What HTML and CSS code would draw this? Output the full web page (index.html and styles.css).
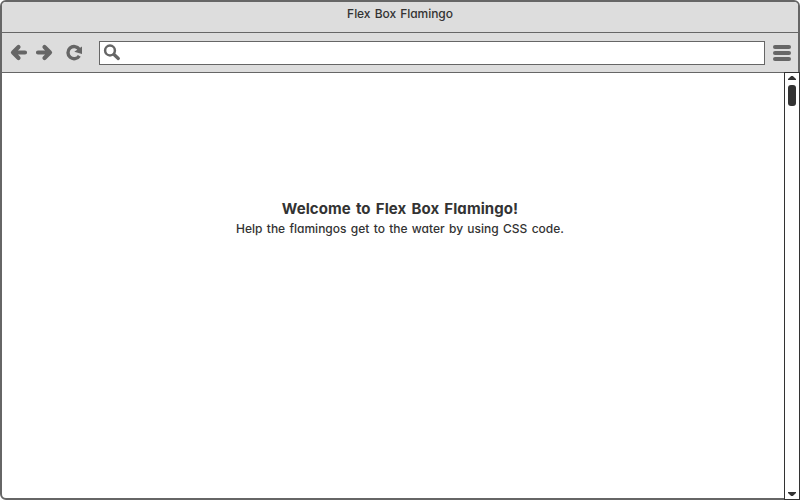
FILE: index.html
```html
<!DOCTYPE html>
<html lang="en">
<head>
<meta charset="utf-8">
<title>Flex Box Flamingo</title>
<link rel="stylesheet" href="styles.css">
</head>
<body>
<div class="window">
  <header class="titlebar"><span class="window-title">Flex Box Flamingo</span></header>
  <nav class="toolbar">
    <svg class="nav-icons" width="97" height="39" viewBox="2 33 97 39" fill="none" stroke="#666" stroke-width="4.200" stroke-linecap="round" stroke-linejoin="round">
      <path d="M25 52.500H14M18.500 47l-5.500 5.500 5.500 5.500"/>
      <path d="M38 52.500h11M44.500 47l5.500 5.500-5.500 5.500"/>
      <path stroke-width="3.400" stroke-linecap="butt" d="M79.200 49.300A6.100 6.100 0 1 0 79.300 55.800"/>
      <path fill="#666" stroke="none" d="M82 46.500V54L74.300 51.800Z"/>
    </svg>
    <div class="address">
      <svg width="20" height="20" viewBox="102 42 20 20" fill="none" stroke="#666">
        <circle cx="110" cy="50.500" r="4.900" stroke-width="2.500"/>
        <path d="M114 54.500l4.300 4" stroke-width="3.300" stroke-linecap="round"/>
      </svg>
    </div>
    <div class="menu"><i></i><i></i><i></i></div>
  </nav>
  <main class="page">
    <h1>Welcome to Flex Box Flamingo!</h1>
    <p>Help the flamingos get to the water by using CSS code.</p>
  </main>
</div>
<div class="scrollbar">
  <svg width="8" height="4" viewBox="0 0 8 4"><path fill="#333" d="M3.200 0h1.600L8 3v1H0V3Z"/></svg>
  <div class="thumb"></div>
  <svg class="down" width="8" height="4" viewBox="0 0 8 4"><path fill="#333" d="M0 0h8v1L4.800 4H3.200L0 1Z"/></svg>
</div>
</body>
</html>
```
FILE: styles.css
```css
* { box-sizing: border-box; }
body {
  margin: 0;
  width: 800px;
  height: 500px;
  overflow: hidden;
  background: #fff;
  color: #333;
  font-family: Inter, Lato, sans-serif;
  font-feature-settings: "cv11" 1;
}
.window {
  display: flex;
  flex-direction: column;
  height: 500px;
  border: 2px solid #666;
  border-radius: 6px;
  overflow: hidden;
}
.titlebar {
  height: 31px;
  flex: none;
  background: #ddd;
  border-bottom: 1px solid #666;
  text-align: center;
}
.window-title {
  display: block;
  font-size: 12px;
  font-weight: 500;
  line-height: 24px;
  word-spacing: 1px;
  letter-spacing: -0.05px;
}
.toolbar {
  display: flex;
  align-items: center;
  height: 40px;
  flex: none;
  background: #ddd;
  border-bottom: 1px solid #666;
}
.nav-icons { flex: none; }
.address {
  display: flex;
  width: 666px;
  height: 24px;
  padding: 0 2px;
  background: #fff;
  border: 1px solid #666;
}
.menu {
  display: flex;
  flex-direction: column;
  gap: 2px;
  margin-left: 8px;
}
.menu i {
  width: 18px;
  height: 4px;
  border-radius: 2px;
  background: #666;
}
.page {
  flex: 1;
  padding-top: 126px;
  text-align: center;
}
h1 {
  margin: 0;
  font-size: 15px;
  font-weight: 650;
  line-height: 20px;
  letter-spacing: 0.08px;
  word-spacing: 1.5px;
}
p {
  margin: 0;
  font-size: 12px;
  font-weight: 500;
  line-height: 20px;
  word-spacing: 1.1px;
}
.scrollbar {
  position: absolute;
  top: 72px;
  left: 784px;
  display: flex;
  flex-direction: column;
  align-items: center;
  width: 16px;
  height: 428px;
  padding: 3px 0;
  background: #fff;
  border: 1px solid #333;
}
.thumb {
  width: 8px;
  height: 21px;
  margin-top: 5px;
  border-radius: 3px;
  background: #333;
}
.down { margin-top: auto; }
```
